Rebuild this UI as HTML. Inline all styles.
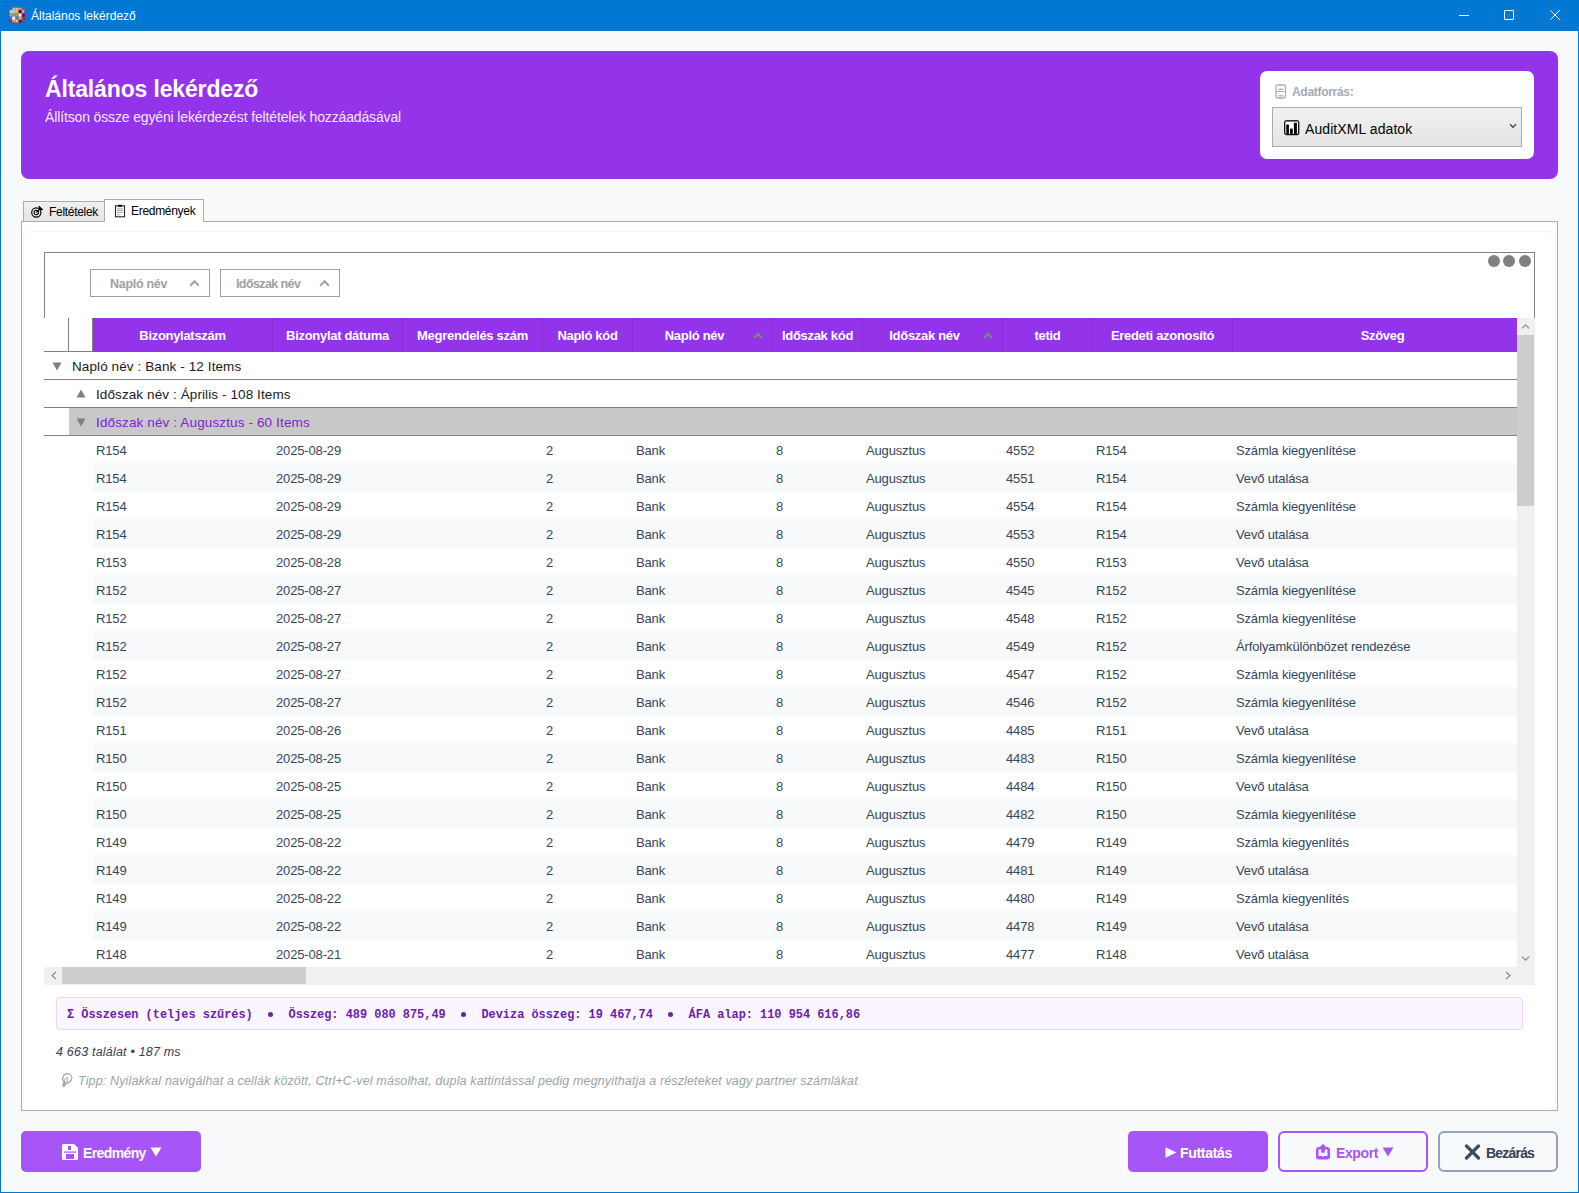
<!DOCTYPE html>
<html><head><meta charset="utf-8">
<style>
*{margin:0;padding:0;box-sizing:border-box}
html,body{width:1579px;height:1193px;overflow:hidden;background:#0078D4}
body{font-family:"Liberation Sans",sans-serif;position:relative}
.a{position:absolute}
.t{position:absolute;white-space:nowrap;line-height:1}
#win{left:1px;top:31px;width:1577px;height:1161px;background:#F8F9FA}
.hcell{position:absolute;top:0;height:34px;border-left:1px solid #8A2BD6;color:#fff;font-weight:bold;font-size:13px;letter-spacing:-0.3px;line-height:35px;text-align:center}
.row{position:absolute;left:44px;width:1473px;height:28px}
.row.alt .bg{position:absolute;left:49px;top:0;right:0;height:29px;background:#F8F9FB}
.c{position:absolute;top:2px;line-height:28px;font-size:13px;letter-spacing:-0.15px;color:#36465A;white-space:nowrap}
</style></head><body>
<!-- title bar -->
<div class="t" style="left:31px;top:10px;font-size:12px;color:#fff;letter-spacing:0px">Általános lekérdező</div>
<div class="a" style="left:1459px;top:15px;width:10px;height:1px;background:#fff"></div>
<div class="a" style="left:1504px;top:10px;width:10px;height:10px;border:1px solid #fff;border-radius:1px"></div>
<svg class="a" style="left:1549px;top:9px" width="12" height="12" viewBox="0 0 12 12"><path d="M1 1L11 11M11 1L1 11" stroke="#fff" stroke-width="1"/></svg>

<div id="win" class="a"></div>
<!-- header card -->
<div class="a" style="left:21px;top:51px;width:1537px;height:128px;background:#9333EA;border-radius:8px"></div>
<div class="t" style="left:45px;top:78px;font-size:23px;font-weight:bold;color:#fff;letter-spacing:-0.15px">Általános lekérdező</div>
<div class="t" style="left:45px;top:110px;font-size:14px;color:#F3E8FF;letter-spacing:-0.14px">Állítson össze egyéni lekérdezést feltételek hozzáadásával</div>
<div class="a" style="left:1260px;top:71px;width:274px;height:88px;background:#fff;border-radius:7px"></div>
<div class="t" style="left:1292px;top:86px;font-size:12px;font-weight:bold;color:#A3AAB4;letter-spacing:-0.3px">Adatforrás:</div>
<div class="a" style="left:1272px;top:107px;width:250px;height:40px;border:1px solid #ACACAC;background:linear-gradient(#F0F0F0,#E5E5E5)"></div>
<div class="t" style="left:1305px;top:122px;font-size:14px;color:#000;letter-spacing:0.08px">AuditXML adatok</div>

<!-- tabs -->
<div class="a" style="left:23px;top:201px;width:82px;height:21px;border:1px solid #ACACAC;background:linear-gradient(#F0F0F0,#E5E5E5)"></div>
<div class="t" style="left:49px;top:206px;font-size:12px;color:#000;letter-spacing:-0.3px">Feltételek</div>
<div class="a" style="left:21px;top:221px;width:1537px;height:890px;border:1px solid #ACACAC;background:#fff"></div>
<div class="a" style="left:104px;top:199px;width:100px;height:23px;border:1px solid #ACACAC;border-bottom:none;background:#fff"></div>
<div class="t" style="left:131px;top:205px;font-size:12px;color:#000;letter-spacing:-0.3px">Eredmények</div>

<div class="a" style="left:23px;top:231px;width:1533px;height:878px;border:1px solid #F5F5F5;border-radius:8px;background:#fff"></div>
<!-- grid frame -->
<div class="a" style="left:44px;top:252px;width:1491px;height:67px;border:1px solid #828282;border-bottom:none;background:#fff"></div>


<!-- group panel chips -->
<div class="a" style="left:90px;top:269px;width:120px;height:28px;border:1px solid #A0A0A0;background:#fff"></div>
<div class="t" style="left:110px;top:278px;font-size:12.5px;font-weight:bold;color:#A0A0A0;letter-spacing:-0.3px">Napló név</div>
<svg class="a" style="left:189px;top:279px" width="11" height="8" viewBox="0 0 11 8"><path d="M1.2 6.8L5.5 2.3L9.8 6.8" stroke="#A0A0A0" stroke-width="2" fill="none"/></svg>
<div class="a" style="left:220px;top:269px;width:120px;height:28px;border:1px solid #A0A0A0;background:#fff"></div>
<div class="t" style="left:236px;top:278px;font-size:12.5px;font-weight:bold;color:#A0A0A0;letter-spacing:-0.6px">Időszak név</div>
<svg class="a" style="left:319px;top:279px" width="11" height="8" viewBox="0 0 11 8"><path d="M1.2 6.8L5.5 2.3L9.8 6.8" stroke="#A0A0A0" stroke-width="2" fill="none"/></svg>
<!-- dots -->
<div class="a" style="left:1488px;top:255px;width:12px;height:12px;border-radius:6px;background:#808080"></div>
<div class="a" style="left:1503px;top:255px;width:12px;height:12px;border-radius:6px;background:#808080"></div>
<div class="a" style="left:1519px;top:255px;width:12px;height:12px;border-radius:6px;background:#808080"></div>

<!-- data area -->
<div class="a" style="left:44px;top:318px;width:1491px;height:667px;background:#fff;overflow:hidden">
</div>
<div class="a" style="left:44px;top:318px;width:49px;height:34px;background:#fff;border-bottom:1px solid #828282;border-right:1px solid #828282"></div>
<div class="a" style="left:68px;top:318px;width:1px;height:33px;background:#828282"></div>
<div class="a" style="left:93px;top:318px;width:1424px;height:34px;background:#9333EA;overflow:hidden"><div class="hcell" style="left:0px;width:179px;border-left:none">Bizonylatszám</div><div class="hcell" style="left:179px;width:130px">Bizonylat dátuma</div><div class="hcell" style="left:309px;width:140px">Megrendelés szám</div><div class="hcell" style="left:449px;width:90px">Napló kód</div><div class="hcell" style="left:539px;width:140px;padding-right:16px">Napló név</div><div class="hcell" style="left:679px;width:90px">Időszak kód</div><div class="hcell" style="left:769px;width:140px;padding-right:16px">Időszak név</div><div class="hcell" style="left:909px;width:90px">tetid</div><div class="hcell" style="left:999px;width:140px">Eredeti azonosító</div><div class="hcell" style="left:1139px;width:300px">Szöveg</div></div>
<svg class="a" style="left:753px;top:331px" width="10" height="8" viewBox="0 0 10 8"><path d="M1.3 7.2L5 2.6L8.7 7.2" stroke="#7C8C6C" stroke-width="2.1" fill="none"/></svg>
<svg class="a" style="left:983px;top:331px" width="10" height="8" viewBox="0 0 10 8"><path d="M1.3 7.2L5 2.6L8.7 7.2" stroke="#7C8C6C" stroke-width="2.1" fill="none"/></svg>

<!-- group rows -->
<div class="a" style="left:44px;top:379px;width:1473px;height:1px;background:#828282"></div>
<div class="a" style="left:44px;top:407px;width:1473px;height:1px;background:#828282"></div>
<div class="a" style="left:69px;top:408px;width:1448px;height:27px;background:#C8C8C8"></div>
<div class="a" style="left:44px;top:435px;width:1473px;height:1px;background:#828282"></div>
<svg class="a" style="left:52px;top:362px" width="10" height="9" viewBox="0 0 10 9"><path d="M0.5 0.5H9.5L5 8.5Z" fill="#808080"/></svg>
<svg class="a" style="left:76px;top:389px" width="10" height="9" viewBox="0 0 10 9"><path d="M0.5 8.5H9.5L5 0.5Z" fill="#808080"/></svg>
<svg class="a" style="left:76px;top:418px" width="10" height="9" viewBox="0 0 10 9"><path d="M0.5 0.5H9.5L5 8.5Z" fill="#808080"/></svg>
<div class="t" style="left:72px;top:360px;font-size:13.5px;color:#1A1A1A;letter-spacing:0.1px">Napló név : Bank - 12 Items</div>
<div class="t" style="left:96px;top:388px;font-size:13.5px;color:#1A1A1A;letter-spacing:0.1px">Időszak név : Április - 108 Items</div>
<div class="t" style="left:96px;top:416px;font-size:13.5px;color:#7E22CE;letter-spacing:0.13px">Időszak név : Augusztus - 60 Items</div>

<div class="a" style="left:0;top:0;width:1517px;height:967px;overflow:hidden">
<div class="row" style="top:435px"><div class="c" style="left:52px">R154</div><div class="c" style="left:232px">2025-08-29</div><div class="c" style="left:502px">2</div><div class="c" style="left:592px">Bank</div><div class="c" style="left:732px">8</div><div class="c" style="left:822px">Augusztus</div><div class="c" style="left:962px">4552</div><div class="c" style="left:1052px">R154</div><div class="c" style="left:1192px">Számla kiegyenlítése</div></div>
<div class="row alt" style="top:463px"><div class="bg"></div><div class="c" style="left:52px">R154</div><div class="c" style="left:232px">2025-08-29</div><div class="c" style="left:502px">2</div><div class="c" style="left:592px">Bank</div><div class="c" style="left:732px">8</div><div class="c" style="left:822px">Augusztus</div><div class="c" style="left:962px">4551</div><div class="c" style="left:1052px">R154</div><div class="c" style="left:1192px">Vevő utalása</div></div>
<div class="row" style="top:491px"><div class="c" style="left:52px">R154</div><div class="c" style="left:232px">2025-08-29</div><div class="c" style="left:502px">2</div><div class="c" style="left:592px">Bank</div><div class="c" style="left:732px">8</div><div class="c" style="left:822px">Augusztus</div><div class="c" style="left:962px">4554</div><div class="c" style="left:1052px">R154</div><div class="c" style="left:1192px">Számla kiegyenlítése</div></div>
<div class="row alt" style="top:519px"><div class="bg"></div><div class="c" style="left:52px">R154</div><div class="c" style="left:232px">2025-08-29</div><div class="c" style="left:502px">2</div><div class="c" style="left:592px">Bank</div><div class="c" style="left:732px">8</div><div class="c" style="left:822px">Augusztus</div><div class="c" style="left:962px">4553</div><div class="c" style="left:1052px">R154</div><div class="c" style="left:1192px">Vevő utalása</div></div>
<div class="row" style="top:547px"><div class="c" style="left:52px">R153</div><div class="c" style="left:232px">2025-08-28</div><div class="c" style="left:502px">2</div><div class="c" style="left:592px">Bank</div><div class="c" style="left:732px">8</div><div class="c" style="left:822px">Augusztus</div><div class="c" style="left:962px">4550</div><div class="c" style="left:1052px">R153</div><div class="c" style="left:1192px">Vevő utalása</div></div>
<div class="row alt" style="top:575px"><div class="bg"></div><div class="c" style="left:52px">R152</div><div class="c" style="left:232px">2025-08-27</div><div class="c" style="left:502px">2</div><div class="c" style="left:592px">Bank</div><div class="c" style="left:732px">8</div><div class="c" style="left:822px">Augusztus</div><div class="c" style="left:962px">4545</div><div class="c" style="left:1052px">R152</div><div class="c" style="left:1192px">Számla kiegyenlítése</div></div>
<div class="row" style="top:603px"><div class="c" style="left:52px">R152</div><div class="c" style="left:232px">2025-08-27</div><div class="c" style="left:502px">2</div><div class="c" style="left:592px">Bank</div><div class="c" style="left:732px">8</div><div class="c" style="left:822px">Augusztus</div><div class="c" style="left:962px">4548</div><div class="c" style="left:1052px">R152</div><div class="c" style="left:1192px">Számla kiegyenlítése</div></div>
<div class="row alt" style="top:631px"><div class="bg"></div><div class="c" style="left:52px">R152</div><div class="c" style="left:232px">2025-08-27</div><div class="c" style="left:502px">2</div><div class="c" style="left:592px">Bank</div><div class="c" style="left:732px">8</div><div class="c" style="left:822px">Augusztus</div><div class="c" style="left:962px">4549</div><div class="c" style="left:1052px">R152</div><div class="c" style="left:1192px">Árfolyamkülönbözet rendezése</div></div>
<div class="row" style="top:659px"><div class="c" style="left:52px">R152</div><div class="c" style="left:232px">2025-08-27</div><div class="c" style="left:502px">2</div><div class="c" style="left:592px">Bank</div><div class="c" style="left:732px">8</div><div class="c" style="left:822px">Augusztus</div><div class="c" style="left:962px">4547</div><div class="c" style="left:1052px">R152</div><div class="c" style="left:1192px">Számla kiegyenlítése</div></div>
<div class="row alt" style="top:687px"><div class="bg"></div><div class="c" style="left:52px">R152</div><div class="c" style="left:232px">2025-08-27</div><div class="c" style="left:502px">2</div><div class="c" style="left:592px">Bank</div><div class="c" style="left:732px">8</div><div class="c" style="left:822px">Augusztus</div><div class="c" style="left:962px">4546</div><div class="c" style="left:1052px">R152</div><div class="c" style="left:1192px">Számla kiegyenlítése</div></div>
<div class="row" style="top:715px"><div class="c" style="left:52px">R151</div><div class="c" style="left:232px">2025-08-26</div><div class="c" style="left:502px">2</div><div class="c" style="left:592px">Bank</div><div class="c" style="left:732px">8</div><div class="c" style="left:822px">Augusztus</div><div class="c" style="left:962px">4485</div><div class="c" style="left:1052px">R151</div><div class="c" style="left:1192px">Vevő utalása</div></div>
<div class="row alt" style="top:743px"><div class="bg"></div><div class="c" style="left:52px">R150</div><div class="c" style="left:232px">2025-08-25</div><div class="c" style="left:502px">2</div><div class="c" style="left:592px">Bank</div><div class="c" style="left:732px">8</div><div class="c" style="left:822px">Augusztus</div><div class="c" style="left:962px">4483</div><div class="c" style="left:1052px">R150</div><div class="c" style="left:1192px">Számla kiegyenlítése</div></div>
<div class="row" style="top:771px"><div class="c" style="left:52px">R150</div><div class="c" style="left:232px">2025-08-25</div><div class="c" style="left:502px">2</div><div class="c" style="left:592px">Bank</div><div class="c" style="left:732px">8</div><div class="c" style="left:822px">Augusztus</div><div class="c" style="left:962px">4484</div><div class="c" style="left:1052px">R150</div><div class="c" style="left:1192px">Vevő utalása</div></div>
<div class="row alt" style="top:799px"><div class="bg"></div><div class="c" style="left:52px">R150</div><div class="c" style="left:232px">2025-08-25</div><div class="c" style="left:502px">2</div><div class="c" style="left:592px">Bank</div><div class="c" style="left:732px">8</div><div class="c" style="left:822px">Augusztus</div><div class="c" style="left:962px">4482</div><div class="c" style="left:1052px">R150</div><div class="c" style="left:1192px">Számla kiegyenlítése</div></div>
<div class="row" style="top:827px"><div class="c" style="left:52px">R149</div><div class="c" style="left:232px">2025-08-22</div><div class="c" style="left:502px">2</div><div class="c" style="left:592px">Bank</div><div class="c" style="left:732px">8</div><div class="c" style="left:822px">Augusztus</div><div class="c" style="left:962px">4479</div><div class="c" style="left:1052px">R149</div><div class="c" style="left:1192px">Számla kiegyenlítés</div></div>
<div class="row alt" style="top:855px"><div class="bg"></div><div class="c" style="left:52px">R149</div><div class="c" style="left:232px">2025-08-22</div><div class="c" style="left:502px">2</div><div class="c" style="left:592px">Bank</div><div class="c" style="left:732px">8</div><div class="c" style="left:822px">Augusztus</div><div class="c" style="left:962px">4481</div><div class="c" style="left:1052px">R149</div><div class="c" style="left:1192px">Vevő utalása</div></div>
<div class="row" style="top:883px"><div class="c" style="left:52px">R149</div><div class="c" style="left:232px">2025-08-22</div><div class="c" style="left:502px">2</div><div class="c" style="left:592px">Bank</div><div class="c" style="left:732px">8</div><div class="c" style="left:822px">Augusztus</div><div class="c" style="left:962px">4480</div><div class="c" style="left:1052px">R149</div><div class="c" style="left:1192px">Számla kiegyenlítés</div></div>
<div class="row alt" style="top:911px"><div class="bg"></div><div class="c" style="left:52px">R149</div><div class="c" style="left:232px">2025-08-22</div><div class="c" style="left:502px">2</div><div class="c" style="left:592px">Bank</div><div class="c" style="left:732px">8</div><div class="c" style="left:822px">Augusztus</div><div class="c" style="left:962px">4478</div><div class="c" style="left:1052px">R149</div><div class="c" style="left:1192px">Vevő utalása</div></div>
<div class="row" style="top:939px"><div class="c" style="left:52px">R148</div><div class="c" style="left:232px">2025-08-21</div><div class="c" style="left:502px">2</div><div class="c" style="left:592px">Bank</div><div class="c" style="left:732px">8</div><div class="c" style="left:822px">Augusztus</div><div class="c" style="left:962px">4477</div><div class="c" style="left:1052px">R148</div><div class="c" style="left:1192px">Vevő utalása</div></div>
</div>

<!-- vertical scrollbar -->
<div class="a" style="left:1517px;top:318px;width:18px;height:649px;background:#F0F0F0"></div>
<div class="a" style="left:1517px;top:335px;width:17px;height:171px;background:#CDCDCD"></div>
<svg class="a" style="left:1520px;top:322px" width="11" height="8" viewBox="0 0 11 8"><path d="M2 6.3L5.5 2.8L9 6.3" stroke="#8A8A8A" stroke-width="1.2" fill="none"/></svg>
<svg class="a" style="left:1520px;top:955px" width="11" height="8" viewBox="0 0 11 8"><path d="M2 1.7L5.5 5.2L9 1.7" stroke="#8A8A8A" stroke-width="1.2" fill="none"/></svg>
<!-- horizontal scrollbar -->
<div class="a" style="left:44px;top:967px;width:1491px;height:18px;background:#F0F0F0"></div>
<div class="a" style="left:62px;top:967px;width:244px;height:17px;background:#CDCDCD"></div>
<svg class="a" style="left:50px;top:970px" width="8" height="11" viewBox="0 0 8 11"><path d="M6 2L2 5.5L6 9" stroke="#8A8A8A" stroke-width="1.2" fill="none"/></svg>
<svg class="a" style="left:1504px;top:970px" width="8" height="11" viewBox="0 0 8 11"><path d="M2 2L6 5.5L2 9" stroke="#8A8A8A" stroke-width="1.2" fill="none"/></svg>

<!-- summary -->
<div class="a" style="left:56px;top:997px;width:1467px;height:33px;background:#FAF5FF;border:1px solid #E9D5FF;border-radius:4px"></div>
<div class="t" style="left:67px;top:1009px;font-family:'Liberation Mono',monospace;font-size:11.91px;white-space:pre;font-weight:bold;color:#6B21A8">Σ Összesen (teljes szűrés)  <span style="display:inline-block;width:7.149px;height:9px;position:relative"><i style="position:absolute;left:1.2px;top:3.3px;width:5px;height:5px;border-radius:50%;background:#6B21A8"></i></span>  Összeg: 489 080 875,49  <span style="display:inline-block;width:7.149px;height:9px;position:relative"><i style="position:absolute;left:1.2px;top:3.3px;width:5px;height:5px;border-radius:50%;background:#6B21A8"></i></span>  Deviza összeg: 19 467,74  <span style="display:inline-block;width:7.149px;height:9px;position:relative"><i style="position:absolute;left:1.2px;top:3.3px;width:5px;height:5px;border-radius:50%;background:#6B21A8"></i></span>  ÁFA alap: 110 954 616,86</div>
<div class="t" style="left:56px;top:1046px;font-size:12.5px;font-style:italic;color:#374151;letter-spacing:0.2px">4 663 találat • 187 ms</div>
<div class="t" style="left:78px;top:1075px;font-size:12.5px;font-style:italic;color:#9AA4A6;letter-spacing:0.14px">Tipp: Nyilakkal navigálhat a cellák között, Ctrl+C-vel másolhat, dupla kattintással pedig megnyithatja a részleteket vagy partner számlákat</div>


<!-- icons -->
<svg class="a" style="left:1275px;top:84px" width="12" height="15" viewBox="0 0 12 15"><rect x="1" y="1" width="9.5" height="13" rx="1.5" fill="none" stroke="#A7AFB8" stroke-width="1.3"/><path d="M1.5 7.5H10" stroke="#A7AFB8" stroke-width="1"/><path d="M3.5 6V4.2L5 5L6 4L7 5L8.3 4.2V6Z M3.5 12.5V10.7L5 11.5L6 10.5L7 11.5L8.3 10.7V12.5Z" fill="#A7AFB8"/></svg>
<svg class="a" style="left:1284px;top:120px" width="16" height="16" viewBox="0 0 16 16"><rect x="0.7" y="0.7" width="14" height="14" rx="2" fill="#fff" stroke="#111" stroke-width="1.3"/><path d="M1.5 1.3H14" stroke="#777" stroke-width="1.2"/><rect x="2.3" y="4.6" width="2.6" height="9.4" fill="#000"/><rect x="6.1" y="8.6" width="2.6" height="5.4" fill="#000"/><rect x="9.9" y="2.8" width="3" height="11.2" fill="#000"/></svg>
<svg class="a" style="left:1509px;top:123px" width="8" height="6" viewBox="0 0 8 6"><path d="M1 1.2L4 4.3L7 1.2" stroke="#444" stroke-width="1.3" fill="none"/></svg>
<svg class="a" style="left:30px;top:205px" width="14" height="14" viewBox="0 0 14 14"><circle cx="6.3" cy="7.5" r="4.6" fill="none" stroke="#000" stroke-width="1.15"/><circle cx="6.3" cy="7.5" r="2.2" fill="none" stroke="#000" stroke-width="1.05"/><path d="M6.3 7.5L10.5 3.3" stroke="#000" stroke-width="1.2"/><path d="M9 1.2L12.8 4.7L9.6 4.3Z" fill="#000" stroke="#000" stroke-width="1"/></svg>
<svg class="a" style="left:114px;top:204px" width="12" height="14" viewBox="0 0 12 14"><rect x="1.5" y="1.8" width="9" height="11" fill="#fff" stroke="#222" stroke-width="1.1"/><rect x="4" y="0.8" width="4" height="2" fill="#111"/><path d="M3 4.8H9M3 6.6H9M3 8.6H9" stroke="#9A9A9A" stroke-width="0.9"/><path d="M3 10.8H6.5" stroke="#B0B0B0" stroke-width="0.9"/></svg>
<svg class="a" style="left:58px;top:1070px" width="18" height="20" viewBox="0 0 18 20"><g transform="translate(0 0.8) rotate(26 9.3 7.3)"><path d="M7.4 11.9C5.7 11 4.8 9.3 4.8 7.3C4.8 4.8 6.8 2.8 9.3 2.8C11.8 2.8 13.8 4.8 13.8 7.3C13.8 9.3 12.9 11 11.2 11.9Z" fill="none" stroke="#9AA5A8" stroke-width="1.15"/><path d="M8 11.4V8.3Q9.3 5.6 10.6 8.3V11.4" fill="none" stroke="#9AA5A8" stroke-width="0.9"/><path d="M7.4 12H11.2L10.7 16.6Q9.3 17.8 7.9 16.6Z" fill="#A9B3B5"/><path d="M7.6 13.6H11" stroke="#8E999C" stroke-width="0.8"/></g></svg>
<!-- app icon -->
<svg class="a" style="left:9px;top:7px" width="16" height="16" viewBox="0 0 16 16"><clipPath id="ic"><rect x="0" y="0" width="16" height="16" rx="3"/></clipPath><g clip-path="url(#ic)"><rect x="0.0" y="0.0" width="3.3" height="3.3" fill="#6E4FB8"/><rect x="3.2" y="0.0" width="3.3" height="3.3" fill="#8EC3F0"/><rect x="6.4" y="0.0" width="3.3" height="3.3" fill="#F5C040"/><rect x="9.6" y="0.0" width="3.3" height="3.3" fill="#F08A30"/><rect x="12.8" y="0.0" width="3.3" height="3.3" fill="#9A5AC0"/><rect x="0.0" y="3.2" width="3.3" height="3.3" fill="#B0D8F8"/><rect x="3.2" y="3.2" width="3.3" height="3.3" fill="#F8D060"/><rect x="6.4" y="3.2" width="3.3" height="3.3" fill="#F8B070"/><rect x="9.6" y="3.2" width="3.3" height="3.3" fill="#401030"/><rect x="12.8" y="3.2" width="3.3" height="3.3" fill="#E8A0C8"/><rect x="0.0" y="6.4" width="3.3" height="3.3" fill="#F09030"/><rect x="3.2" y="6.4" width="3.3" height="3.3" fill="#40B0D0"/><rect x="6.4" y="6.4" width="3.3" height="3.3" fill="#F07820"/><rect x="9.6" y="6.4" width="3.3" height="3.3" fill="#F8F0E8"/><rect x="12.8" y="6.4" width="3.3" height="3.3" fill="#602030"/><rect x="0.0" y="9.6" width="3.3" height="3.3" fill="#8A50B0"/><rect x="3.2" y="9.6" width="3.3" height="3.3" fill="#F8F8F8"/><rect x="6.4" y="9.6" width="3.3" height="3.3" fill="#3A80E0"/><rect x="9.6" y="9.6" width="3.3" height="3.3" fill="#F8A040"/><rect x="12.8" y="9.6" width="3.3" height="3.3" fill="#A03050"/><rect x="0.0" y="12.8" width="3.3" height="3.3" fill="#7040A0"/><rect x="3.2" y="12.8" width="3.3" height="3.3" fill="#F09038"/><rect x="6.4" y="12.8" width="3.3" height="3.3" fill="#F8C850"/><rect x="9.6" y="12.8" width="3.3" height="3.3" fill="#502030"/><rect x="12.8" y="12.8" width="3.3" height="3.3" fill="#8050A0"/></g><rect x="0.5" y="0.5" width="15" height="15" rx="3" fill="none" stroke="#5A3A90" stroke-width="0.8" opacity="0.7"/></svg>
<!-- buttons -->
<div class="a" style="left:21px;top:1131px;width:180px;height:41px;background:#A855F7;border-radius:5px"></div>
<svg class="a" style="left:61px;top:1143px" width="18" height="18" viewBox="0 0 18 18"><path d="M2.5 1H13L17 5V15.5Q17 17 15.5 17H2.5Q1 17 1 15.5V2.5Q1 1 2.5 1Z" fill="#fff"/><rect x="7" y="3" width="3" height="4" fill="#A855F7"/><rect x="3" y="8.5" width="12" height="1.2" fill="#A855F7"/><rect x="5" y="11" width="8" height="5" fill="#A855F7"/></svg>
<div class="t" style="left:83px;top:1146px;font-size:14px;font-weight:bold;color:#fff;letter-spacing:-0.62px">Eredmény</div>
<svg class="a" style="left:150px;top:1147px" width="12" height="10" viewBox="0 0 12 10"><path d="M0.5 0.5H11.5L6 9.5Z" fill="#fff"/></svg>
<div class="a" style="left:1128px;top:1131px;width:140px;height:41px;background:#A855F7;border-radius:5px"></div>
<svg class="a" style="left:1165px;top:1147px" width="12" height="11" viewBox="0 0 12 11"><path d="M0.5 0.2V10.8L11.5 5.5Z" fill="#fff"/></svg>
<div class="t" style="left:1180px;top:1146px;font-size:14px;font-weight:bold;color:#fff;letter-spacing:-0.3px">Futtatás</div>
<div class="a" style="left:1278px;top:1131px;width:150px;height:41px;border:2px solid #A855F7;border-radius:6px"></div>
<svg class="a" style="left:1315px;top:1143px" width="16" height="17" viewBox="0 0 16 17"><rect x="1" y="4" width="14" height="12.5" rx="3" fill="#A855F7"/><path d="M8 0.8L11.5 4.5V8.5H4.5V4.5Z" fill="#A855F7"/><path d="M3.5 6.5H6.5V9.5H9.5V6.5H12.5V13H9L8 14L7 13H3.5Z" fill="#fff" opacity="0.9"/><path d="M6.5 6.5V9.5H9.5V6.5" fill="#A855F7"/></svg>
<div class="t" style="left:1336px;top:1146px;font-size:14px;font-weight:bold;color:#A855F7;letter-spacing:-0.4px">Export</div>
<svg class="a" style="left:1382px;top:1147px" width="12" height="10" viewBox="0 0 12 10"><path d="M0.5 0.5H11.5L6 9.5Z" fill="#A855F7"/></svg>
<div class="a" style="left:1438px;top:1131px;width:120px;height:41px;border:2px solid #94A3B8;border-radius:6px"></div>
<svg class="a" style="left:1464px;top:1144px" width="17" height="16" viewBox="0 0 17 16"><path d="M2.5 2L14.5 14M14.5 2L2.5 14" stroke="#3E4C63" stroke-width="3.2" stroke-linecap="round"/></svg>
<div class="t" style="left:1486px;top:1146px;font-size:14px;font-weight:bold;color:#334155;letter-spacing:-0.8px">Bezárás</div>
</body></html>
